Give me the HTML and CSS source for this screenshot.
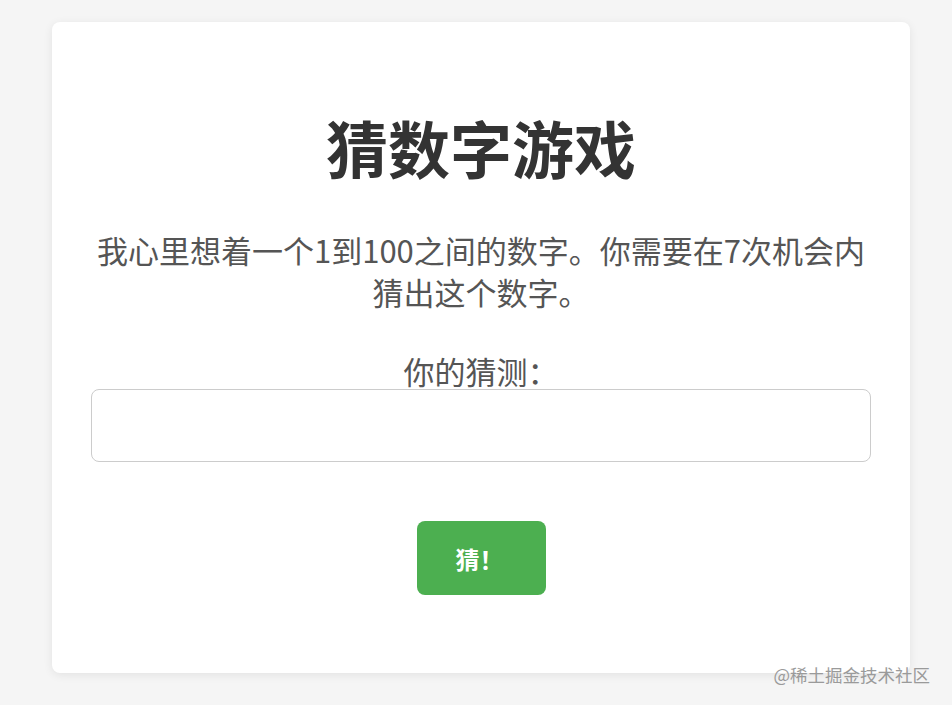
FILE: index.html
```html
<!DOCTYPE html>
<html lang="zh-CN">
<head>
<meta charset="utf-8">
<title>猜数字游戏</title>
<link rel="stylesheet" href="styles.css">
</head>
<body>
<div class="card">
  <h1 class="title">猜数字游戏</h1>
  <p class="intro">我心里想着一个1到100之间的数字。你需要在7次机会内猜出这个数字。</p>
  <label class="label" for="guess">你的猜测：</label>
  <input class="field" id="guess" type="text">
  <div class="actions"><button class="btn" type="button">猜！</button></div>
</div>
<div class="watermark">@稀土掘金技术社区</div>
</body>
</html>
```
FILE: styles.css
```css
html, body {
  margin: 0;
  padding: 0;
}
body {
  background: #f5f5f5;
  font-family: "Noto Sans CJK SC", "Noto Sans", sans-serif;
  height: 705px;
  overflow: hidden;
  position: relative;
}
.card {
  box-sizing: border-box;
  width: 858px;
  margin: 22px 0 0 52px;
  background: #fff;
  border-radius: 8px;
  box-shadow: 0 2px 10px rgba(0, 0, 0, 0.08);
  padding: 49px 39px 78px;
  text-align: center;
}
.title {
  margin: 39px 0 0;
  font-size: 62px;
  line-height: 74px;
  font-weight: 700;
  color: #333;
}
.intro {
  margin: 45px 0 0;
  font-size: 31px;
  line-height: 42px;
  color: #555;
}
.label {
  display: block;
  margin-top: 40px;
  font-size: 31px;
  line-height: 36px;
  color: #555;
}
.field {
  display: block;
  box-sizing: border-box;
  width: 100%;
  height: 73px;
  margin: 0;
  border: 1px solid #ccc;
  border-radius: 8px;
  font-size: 28px;
  padding: 0 16px;
  outline: none;
}
.actions {
  margin-top: 59px;
  display: flex;
  justify-content: center;
}
.btn {
  width: 129px;
  height: 74px;
  border: none;
  border-radius: 8px;
  background: #4caf50;
  color: #fff;
  font-family: "Noto Sans CJK SC", "Noto Sans", sans-serif;
  font-size: 24px;
  font-weight: 700;
  padding: 0 3px 0 0;
}
.watermark {
  position: absolute;
  right: 22px;
  top: 663px;
  font-size: 17.5px;
  line-height: 24px;
  color: #9a9a9a;
}
```
